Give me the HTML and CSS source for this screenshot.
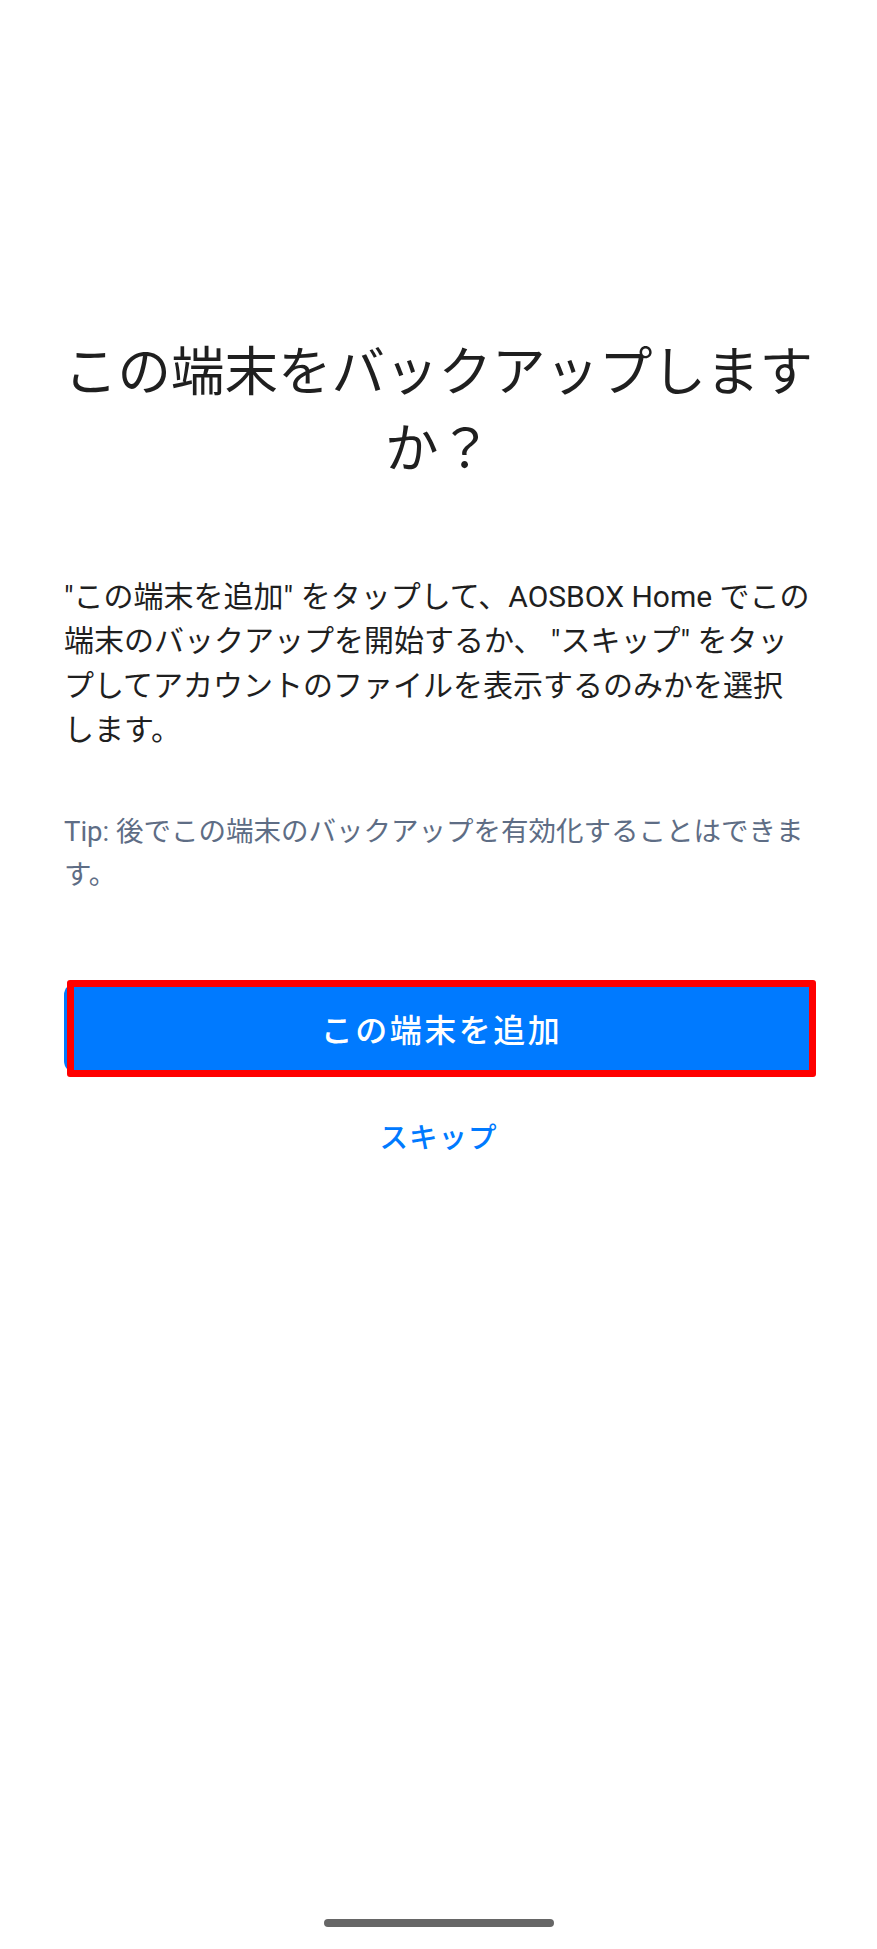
FILE: index.html
```html
<!DOCTYPE html>
<html lang="ja">
<head>
<meta charset="utf-8">
<title>この端末をバックアップしますか？</title>
<link rel="stylesheet" href="styles.css">
</head>
<body>
<div class="screen">
  <main class="content">
    <h1 class="title">この端末をバックアップしますか？</h1>
    <p class="desc">"この端末を追加" をタップして、AOSBOX Home でこの端末のバックアップを開始するか、 "スキップ" をタップしてアカウントのファイルを表示するのみかを選択します。</p>
    <p class="tip">Tip: 後でこの端末のバックアップを有効化することはできます。</p>
    <div class="primary-wrap">
      <button class="primary" type="button">この端末を追加</button>
      <span class="highlight"></span>
    </div>
    <button class="skip" type="button">スキップ</button>
  </main>
  <div class="home-bar"></div>
</div>
</body>
</html>
```

FILE: styles.css
```css
html, body {
  margin: 0;
  padding: 0;
  background: #ffffff;
}

body {
  font-family: Roboto, "Noto Sans CJK JP", sans-serif;
  color: #1f1f1f;
}

.screen {
  min-height: 1949px;
  display: flex;
  flex-direction: column;
  box-sizing: border-box;
}

.content {
  padding: 334px 64px 0;
  display: flex;
  flex-direction: column;
}

.title {
  margin: 0 -10px;
  font-size: 53.5px;
  font-weight: 400;
  line-height: 77px;
  text-align: center;
  color: #1f1f1f;
}

.desc {
  margin: 87px 0 0;
  font-size: 30px;
  line-height: 44.3px;
  color: #1f1f1f;
}

.tip {
  margin: 58px 0 0;
  font-size: 27.5px;
  line-height: 43px;
  color: #5e6d85;
}

.primary-wrap {
  position: relative;
  margin-top: 87px;
}

.primary {
  display: block;
  width: 100%;
  height: 90px;
  border: 0;
  border-radius: 12px;
  background: #007aff;
  color: #ffffff;
  font-family: Roboto, "Noto Sans CJK JP", sans-serif;
  font-size: 32px;
  font-weight: 500;
  letter-spacing: 2.5px;
  padding: 0 0 0 6px;
  cursor: pointer;
}

.highlight {
  position: absolute;
  left: 3px;
  right: -3px;
  top: -3px;
  bottom: -4px;
  border: 7px solid #ff0000;
  border-radius: 3px;
  pointer-events: none;
}

.skip {
  align-self: center;
  margin-top: 46px;
  border: 0;
  background: transparent;
  padding: 0;
  color: #007aff;
  font-family: Roboto, "Noto Sans CJK JP", sans-serif;
  font-size: 28.5px;
  font-weight: 500;
  line-height: 40px;
  letter-spacing: 1px;
  cursor: pointer;
}

.home-bar {
  margin: auto auto 22px;
  width: 230px;
  height: 8px;
  border-radius: 4px;
  background: #666666;
}
```
